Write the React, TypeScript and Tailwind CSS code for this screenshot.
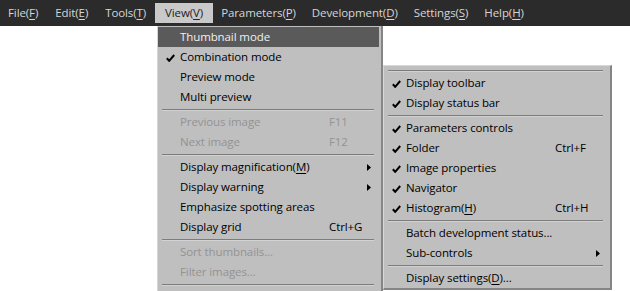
import React from "react";

type Entry =
  | { sep: true }
  | {
      sep?: false;
      label: React.ReactNode;
      check?: boolean;
      shortcut?: string;
      arrow?: boolean;
      disabled?: boolean;
      hi?: boolean;
    };

const U = ({ c }: { c: string }) => <span className="underline underline-offset-2">{c}</span>;

const Check = () => (
  <svg width="9" height="8" viewBox="0 0 9 8" className="block">
    <path d="M0.8 4.2 L3.2 6.8 L8.2 1" fill="none" stroke="#000" strokeWidth="2" strokeLinejoin="miter" />
  </svg>
);

const Arrow = () => (
  <svg width="4" height="7" viewBox="0 0 4 7" className="block">
    <polygon points="0,0 4,3.5 0,7" fill="#000" />
  </svg>
);

function Menu({ items }: { items: Entry[] }) {
  return (
    <>
      {items.map((it, i) => {
        if (it.sep) {
          return (
            <div key={i} className="h-[5px] pt-[2px] pl-[4px] pr-[5px]">
              <div className="h-[2px] border-t border-t-[#7c7c7c] border-b border-b-[#d2d2d2]" />
            </div>
          );
        }
        const color = it.hi ? "text-[#f0f0f0]" : it.disabled ? "text-[#939393]" : "text-black";
        return (
          <div
            key={i}
            className={`h-[20px] flex items-center ${it.hi ? "bg-[#5a5a5a]" : ""} ${color}`}
          >
            <div className="w-[22px] pl-[8px] flex items-center pt-[1px]">{it.check ? <Check /> : null}</div>
            <div className="w-[149px] whitespace-nowrap leading-[20px]">{it.label}</div>
            <div className="whitespace-nowrap leading-[20px]">{it.shortcut ?? ""}</div>
            <div className="ml-auto mr-[8px]">{it.arrow ? <Arrow /> : null}</div>
          </div>
        );
      })}
    </>
  );
}

const viewItems: Entry[] = [
  { label: "Thumbnail mode", hi: true },
  { label: "Combination mode", check: true },
  { label: "Preview mode" },
  { label: "Multi preview" },
  { sep: true },
  { label: "Previous image", shortcut: "F11", disabled: true },
  { label: "Next image", shortcut: "F12", disabled: true },
  { sep: true },
  { label: <>Display magnification(<U c="M" />)</>, arrow: true },
  { label: "Display warning", arrow: true },
  { label: "Emphasize spotting areas" },
  { label: "Display grid", shortcut: "Ctrl+G" },
  { sep: true },
  { label: "Sort thumbnails...", disabled: true },
  { label: "Filter images...", disabled: true },
  { sep: true },
];

const subItems: Entry[] = [
  { sep: true },
  { label: "Display toolbar", check: true },
  { label: "Display status bar", check: true },
  { sep: true },
  { label: "Parameters controls", check: true },
  { label: "Folder", check: true, shortcut: "Ctrl+F" },
  { label: "Image properties", check: true },
  { label: "Navigator", check: true },
  { label: <>Histogram(<U c="H" />)</>, check: true, shortcut: "Ctrl+H" },
  { sep: true },
  { label: "Batch development status..." },
  { label: "Sub-controls", arrow: true },
  { sep: true },
  { label: <>Display settings(<U c="D" />)...</> },
];

const bar: { name: string; key: string; cls: string }[] = [
  { name: "File", key: "F", cls: "px-[8px] mr-[1px] text-[#d6d6d6]" },
  { name: "Edit", key: "E", cls: "px-[8px] mr-[1px] text-[#d6d6d6]" },
  { name: "Tools", key: "T", cls: "px-[8px] mr-[1px] text-[#d6d6d6]" },
  { name: "View", key: "V", cls: "px-[10px] mr-0 bg-[#c9c9c9] text-[#222]" },
  { name: "Parameters", key: "P", cls: "px-[8px] mr-0 text-[#d6d6d6]" },
  { name: "Development", key: "D", cls: "px-[8px] mr-0 text-[#d6d6d6]" },
  { name: "Settings", key: "S", cls: "px-[8px] mr-0 text-[#d6d6d6]" },
  { name: "Help", key: "H", cls: "px-[8px] mr-0 text-[#d6d6d6]" },
];

export default function App() {
  return (
    <div
      className="relative w-[630px] h-[291px] overflow-hidden bg-white text-[11.5px] tracking-[-0.1px]"
      style={{ fontFamily: '"Open Sans", "Noto Sans", sans-serif' }}
    >
      <div className="h-[26px] bg-[#2b2b2b] flex items-center">
        {bar.map((b) => (
          <div key={b.name} className={`h-[20px] flex items-center whitespace-nowrap ${b.cls}`}>
            {b.name}(<U c={b.key} />)
          </div>
        ))}
      </div>

      <div className="absolute left-[157px] top-[26px] w-[226px] h-[275px] bg-[#bfbfbf] border-l border-l-[#d4d4d4] border-r-2 border-r-[#858585] pt-[1px] pr-[2px]">
        <Menu items={viewItems} />
      </div>

      <div className="absolute left-[383px] top-[65px] w-[229px] bg-[#bfbfbf] border-l border-t border-l-[#d8d8d8] border-t-[#d8d8d8] border-r-2 border-b-2 border-r-[#858585] border-b-[#858585] pt-[2px] pr-[2px]">
        <Menu items={subItems} />
      </div>
    </div>
  );
}
